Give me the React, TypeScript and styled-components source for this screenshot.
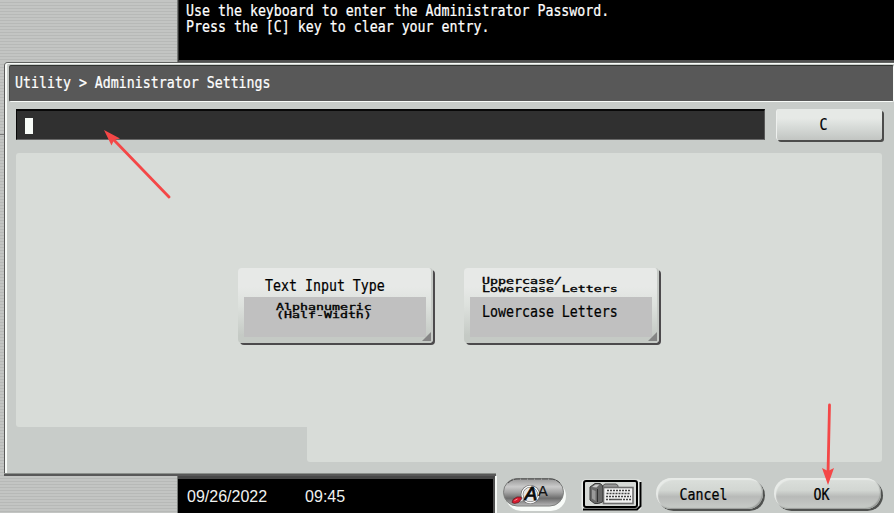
import React from "react";
import styled, { createGlobalStyle } from "styled-components";

const Global = createGlobalStyle`
  * { box-sizing: border-box; }
  body { margin: 0; background: #c8ccc9; overflow: hidden; }
`;

const stripes = `repeating-linear-gradient(180deg, #c3c5c3 0 2px, #b7b9b7 2px 3px)`;

const Screen = styled.div`
  position: relative;
  width: 894px;
  height: 513px;
  display: flex;
  flex-direction: column;
  overflow: hidden;
  background: #c8ccc9;
`;

const TopBar = styled.div`
  height: 62px;
  flex: none;
  display: flex;
`;

const Sidebar = styled.div`
  width: 178px;
  flex: none;
  background: ${stripes};
  border-right: 1px solid #777a77;
`;

const MessageArea = styled.div`
  flex: 1;
  background: #000;
  border-bottom: 2px solid #505050;
  border-left: 1px solid #303030;
  padding: 3px 0 0 7px;
`;

const Text = styled.div<{ $color?: string; $compact?: boolean }>`
  height: ${(p) => (p.$compact ? 8 : 16)}px;
  display: flex;
  align-items: center;
  font-family: "DejaVu Sans Mono", monospace;
  font-size: 13.28px;
  line-height: ${(p) => (p.$compact ? 11 : 16)}px;
  white-space: pre;
  color: ${(p) => p.$color || "#000"};
  -webkit-text-stroke: ${(p) => (p.$compact ? "0.5px" : "0.2px")};

  & > span {
    display: block;
    transform: scaleY(${(p) => (p.$compact ? 0.71 : 1.24)});
  }
`;

const Middle = styled.div`
  height: 414px;
  flex: none;
  display: flex;
`;

const Edge = styled.div`
  width: 4px;
  flex: none;
  background: ${stripes};
`;

const EdgeMark = styled.div`
  height: 1px;
  margin-top: 72px;
  background: #777;
`;

const Panel = styled.div`
  flex: 1;
  border-left: 1px solid #5a5a5a;
  border-top: 1px solid #606260;
  border-top-left-radius: 4px;
  background: #c8ccc9;
`;

const PanelFace = styled.div`
  height: 413px;
  border-left: 2px solid #f8fbf8;
  border-top: 1px solid #f8fbf8;
  border-top-left-radius: 3px;
  display: flex;
  flex-direction: column;
`;

const Header = styled.div`
  height: 37px;
  flex: none;
  margin: 1px 0 0 2px;
  padding: 9px 0 0 5px;
  background: #585858;
  border: 1px solid #f8fbf8;
  border-top-color: #303330;
  border-left-color: #484a48;
  border-radius: 2px;
`;

const EntryRow = styled.div`
  display: flex;
  height: 33px;
  flex: none;
  margin: 7px 0 0 9px;
`;

const Entry = styled.div`
  width: 749px;
  height: 31px;
  padding: 7px 0 0 8px;
  background: #303030;
  border: solid;
  border-width: 2px 1px 1px;
  border-color: #080808 #585858 #686868 #080808;
`;

const Caret = styled.div`
  width: 8px;
  height: 16px;
  background: #f8fcf8;
`;

const ClearButton = styled.div`
  width: 106px;
  height: 31px;
  margin-left: 11px;
  padding-top: 8px;
  display: flex;
  justify-content: center;
  padding-right: 12px;
  border-radius: 3px;
  background: linear-gradient(#e6e9e6 0 30%, #d7dbd8 58%, #c2c5c2);
  border-left: 1px solid #eef0ee;
  box-shadow: 2px 2px 0 #4c4c4b;
`;

const Workspace = styled.div`
  width: 866px;
  height: 274px;
  flex: none;
  margin: 11px 0 0 9px;
  padding: 115px 0 0 222px;
  display: flex;
  gap: 31px;
  background: #d8dcd8;
  border-radius: 3px 3px 0 3px;
`;

const WorkspaceFoot = styled.div`
  width: 575px;
  height: 35px;
  flex: none;
  margin-left: 300px;
  background: #d8dcd8;
  border-radius: 0 0 3px 3px;
`;

const PanelBase = styled.div`
  width: 492px;
  height: 3px;
  flex: none;
  margin: auto 0 0 -3px;
  background: #585858;
  border-top: 1px solid #8c908c;
`;

const OptionButton = styled.div`
  width: 195px;
  height: 75px;
  padding: 0 5px 0 6px;
  border-radius: 4px;
  border-right: 2px solid #c6cac6;
  background: linear-gradient(#e7e9e7 0 25%, #dde1dd 50%, #c5cac5 90%);
  box-shadow: 2px 2px 0 #4c4a4c;
`;

const OptionTitle = styled.div<{ $indent: number; $top: number }>`
  height: 29px;
  padding: ${(p) => p.$top}px 0 0 ${(p) => p.$indent}px;
`;

const OptionValue = styled.div<{ $indent: number; $top: number }>`
  width: 182px;
  height: 40px;
  padding: ${(p) => p.$top}px 0 0 ${(p) => p.$indent}px;
  background: #c0c0c0;
`;

const Corner = styled.div`
  width: 9px;
  height: 9px;
  margin: -5px 0 0 178px;
  background: #858585;
  clip-path: polygon(100% 0, 100% 100%, 0 100%);
`;

const Bottom = styled.div`
  height: 37px;
  flex: none;
  display: flex;
`;

const Status = styled.div`
  width: 317px;
  flex: none;
  display: flex;
  gap: 38px;
  padding: 7px 0 0 9px;
  background: #000;
  border-top: 3px solid #484848;
  border-right: 2px solid #505050;
  color: #f0f2f0;
  font: 16px/22px "Liberation Sans", Arial, sans-serif;
`;

const Footer = styled.div`
  flex: 1;
  display: flex;
  align-items: flex-start;
  border-left: 2px solid #f5f8f5;
  padding: 1px 0 0 5px;
`;

const Tools = styled.svg`
  flex: none;
  display: block;
`;

const PillButton = styled.div<{ $gap: number; $shift: number }>`
  width: 107px;
  height: 31px;
  flex: none;
  margin: 1px 0 0 ${(p) => p.$gap}px;
  padding: 9px ${(p) => p.$shift}px 0 0;
  display: flex;
  justify-content: center;
  border-radius: 16px;
  background: linear-gradient(#dce0dc, #d2d6d2 40%, #b8bab8 60%, #c8ccc8);
  box-shadow: inset 2px 2px 1px #e8ebe8, inset -1px -1px 1px #999c99, 2px 2px 0 #505250;
`;

const Arrows = styled.svg`
  position: absolute;
  inset: 0;
  pointer-events: none;
`;

function Line({ children, color, compact }: { children: string; color?: string; compact?: boolean }) {
  return (
    <Text $color={color} $compact={compact}>
      <span>{children}</span>
    </Text>
  );
}

function ToolIcons() {
  return (
    <Tools width="140" height="36" viewBox="502 477 140 36">
      <defs>
        <linearGradient id="capsule" x1="0" y1="0" x2="0" y2="1">
          <stop offset="0" stopColor="#969696" />
          <stop offset=".3" stopColor="#cacaca" />
          <stop offset=".5" stopColor="#a5a5a5" />
          <stop offset=".72" stopColor="#6d6d6d" />
          <stop offset="1" stopColor="#b8b8b8" />
        </linearGradient>
      </defs>
      <rect x="506" y="481" width="60" height="30" rx="15" fill="#f8fbf8" />
      <rect x="503.5" y="478.5" width="60" height="27.5" rx="13.7" fill="url(#capsule)" stroke="#7c7e7c" />
      <path d="M508 483q4-4 10-4h32q6 0 10 4" fill="none" stroke="#505050" strokeDasharray="6 1" />
      <circle cx="530.3" cy="494.5" r="8.3" fill="#e6e6e6" stroke="#606060" strokeWidth="2.6" />
      <circle cx="530.3" cy="494.5" r="8.3" fill="none" stroke="#fafafa" strokeWidth="1.4" />
      <text x="524.5" y="500" fontFamily="Liberation Sans, sans-serif" fontSize="19" fontStyle="italic" fill="#0a0a0a" stroke="#0a0a0a" strokeWidth=".9">A</text>
      <text x="538" y="496" fontFamily="Liberation Sans, sans-serif" fontSize="14.5" fill="#111" stroke="#111" strokeWidth=".2">A</text>
      <path d="M520 498l4 0-1 3-3 1z" fill="#ddd" stroke="#777" strokeWidth=".6" />
      <path d="M513 499.5l4-2.5h4l.5 2-3 3.500-4 1-2.500-1z" fill="#d81c30" stroke="#5c1820" strokeWidth=".7" />
      <path d="M514.500 500.500l3-1.500" stroke="#ff8b94" />
      <rect x="581.5" y="479.5" width="60" height="31" rx="4" fill="#e9ece9" />
      <path d="M583 509.500h54l3.500-3.500V482" fill="none" stroke="#000" strokeWidth="2" />
      <rect x="584" y="481" width="53" height="26" rx="2" fill="#d6d9d6" stroke="#000" strokeWidth="2" />
      <path d="M603 487v-1.500l2-1.500h11l2 1.500V487" fill="#999" stroke="#555" />
      <path d="M590 487l5-3.500h5l2.500 2V502l-4 1.500h-4l-4.500-3.500z" fill="#686868" stroke="#3a3a3a" />
      <path d="M592 487l3.500-2.500h4l-3 3z" fill="#c8c8c8" />
      <path d="M592 489.500l3.500 1.500v10l-3.500-2.500z" fill="#9a9a9a" />
      <path d="M597.500 489v13" stroke="#303030" />
      <rect x="603.500" y="487.500" width="29.500" height="16" fill="#f2f2f2" stroke="#6d6d6d" strokeWidth="1.6" />
      <path d="M607 490.500h23M606.500 493.500h24M606 496.500h25M606 499.500h5m12 0h8" stroke="#444" strokeWidth="1.7" strokeDasharray="2 1" />
      <path d="M611 499.500h11" stroke="#555" strokeWidth="1.5" />
    </Tools>
  );
}

export default function App() {
  return (
    <>
      <Global />
      <Screen>
        <TopBar>
          <Sidebar />
          <MessageArea>
            <Line color="#fff">Use the keyboard to enter the Administrator Password.</Line>
            <Line color="#fff">Press the [C] key to clear your entry.</Line>
          </MessageArea>
        </TopBar>
        <Middle>
          <Edge>
            <EdgeMark />
          </Edge>
          <Panel>
            <PanelFace>
              <Header>
                <Line color="#fff">{"Utility > Administrator Settings"}</Line>
              </Header>
              <EntryRow>
                <Entry>
                  <Caret />
                </Entry>
                <ClearButton>
                  <Line>C</Line>
                </ClearButton>
              </EntryRow>
              <Workspace>
                <OptionButton>
                  <OptionTitle $indent={21} $top={10}>
                    <Line>Text Input Type</Line>
                  </OptionTitle>
                  <OptionValue $indent={32} $top={5}>
                    <Line compact>Alphanumeric</Line>
                    <Line compact>(Half-Width)</Line>
                  </OptionValue>
                  <Corner />
                </OptionButton>
                <OptionButton>
                  <OptionTitle $indent={12} $top={8}>
                    <Line compact>Uppercase/</Line>
                    <Line compact>Lowercase Letters</Line>
                  </OptionTitle>
                  <OptionValue $indent={12} $top={7}>
                    <Line>Lowercase Letters</Line>
                  </OptionValue>
                  <Corner />
                </OptionButton>
              </Workspace>
              <WorkspaceFoot />
              <PanelBase />
            </PanelFace>
          </Panel>
        </Middle>
        <Bottom>
          <Sidebar />
          <Status>
            <span>09/26/2022</span>
            <span>09:45</span>
          </Status>
          <Footer>
            <ToolIcons />
            <PillButton $gap={14} $shift={12}>
              <Line>Cancel</Line>
            </PillButton>
            <PillButton $gap={11} $shift={12}>
              <Line>OK</Line>
            </PillButton>
          </Footer>
        </Bottom>
        <Arrows width="894" height="513" viewBox="0 0 894 513">
          <path d="M113 139L169 197M829.5 405L828 474" fill="none" stroke="#f44747" strokeWidth="2.8" strokeLinecap="round" />
          <path d="M104 130l16 8.500-6 1.500-2.500 5.500zM822 468l6 3 6-3-6 17z" fill="#f44747" />
        </Arrows>
      </Screen>
    </>
  );
}
